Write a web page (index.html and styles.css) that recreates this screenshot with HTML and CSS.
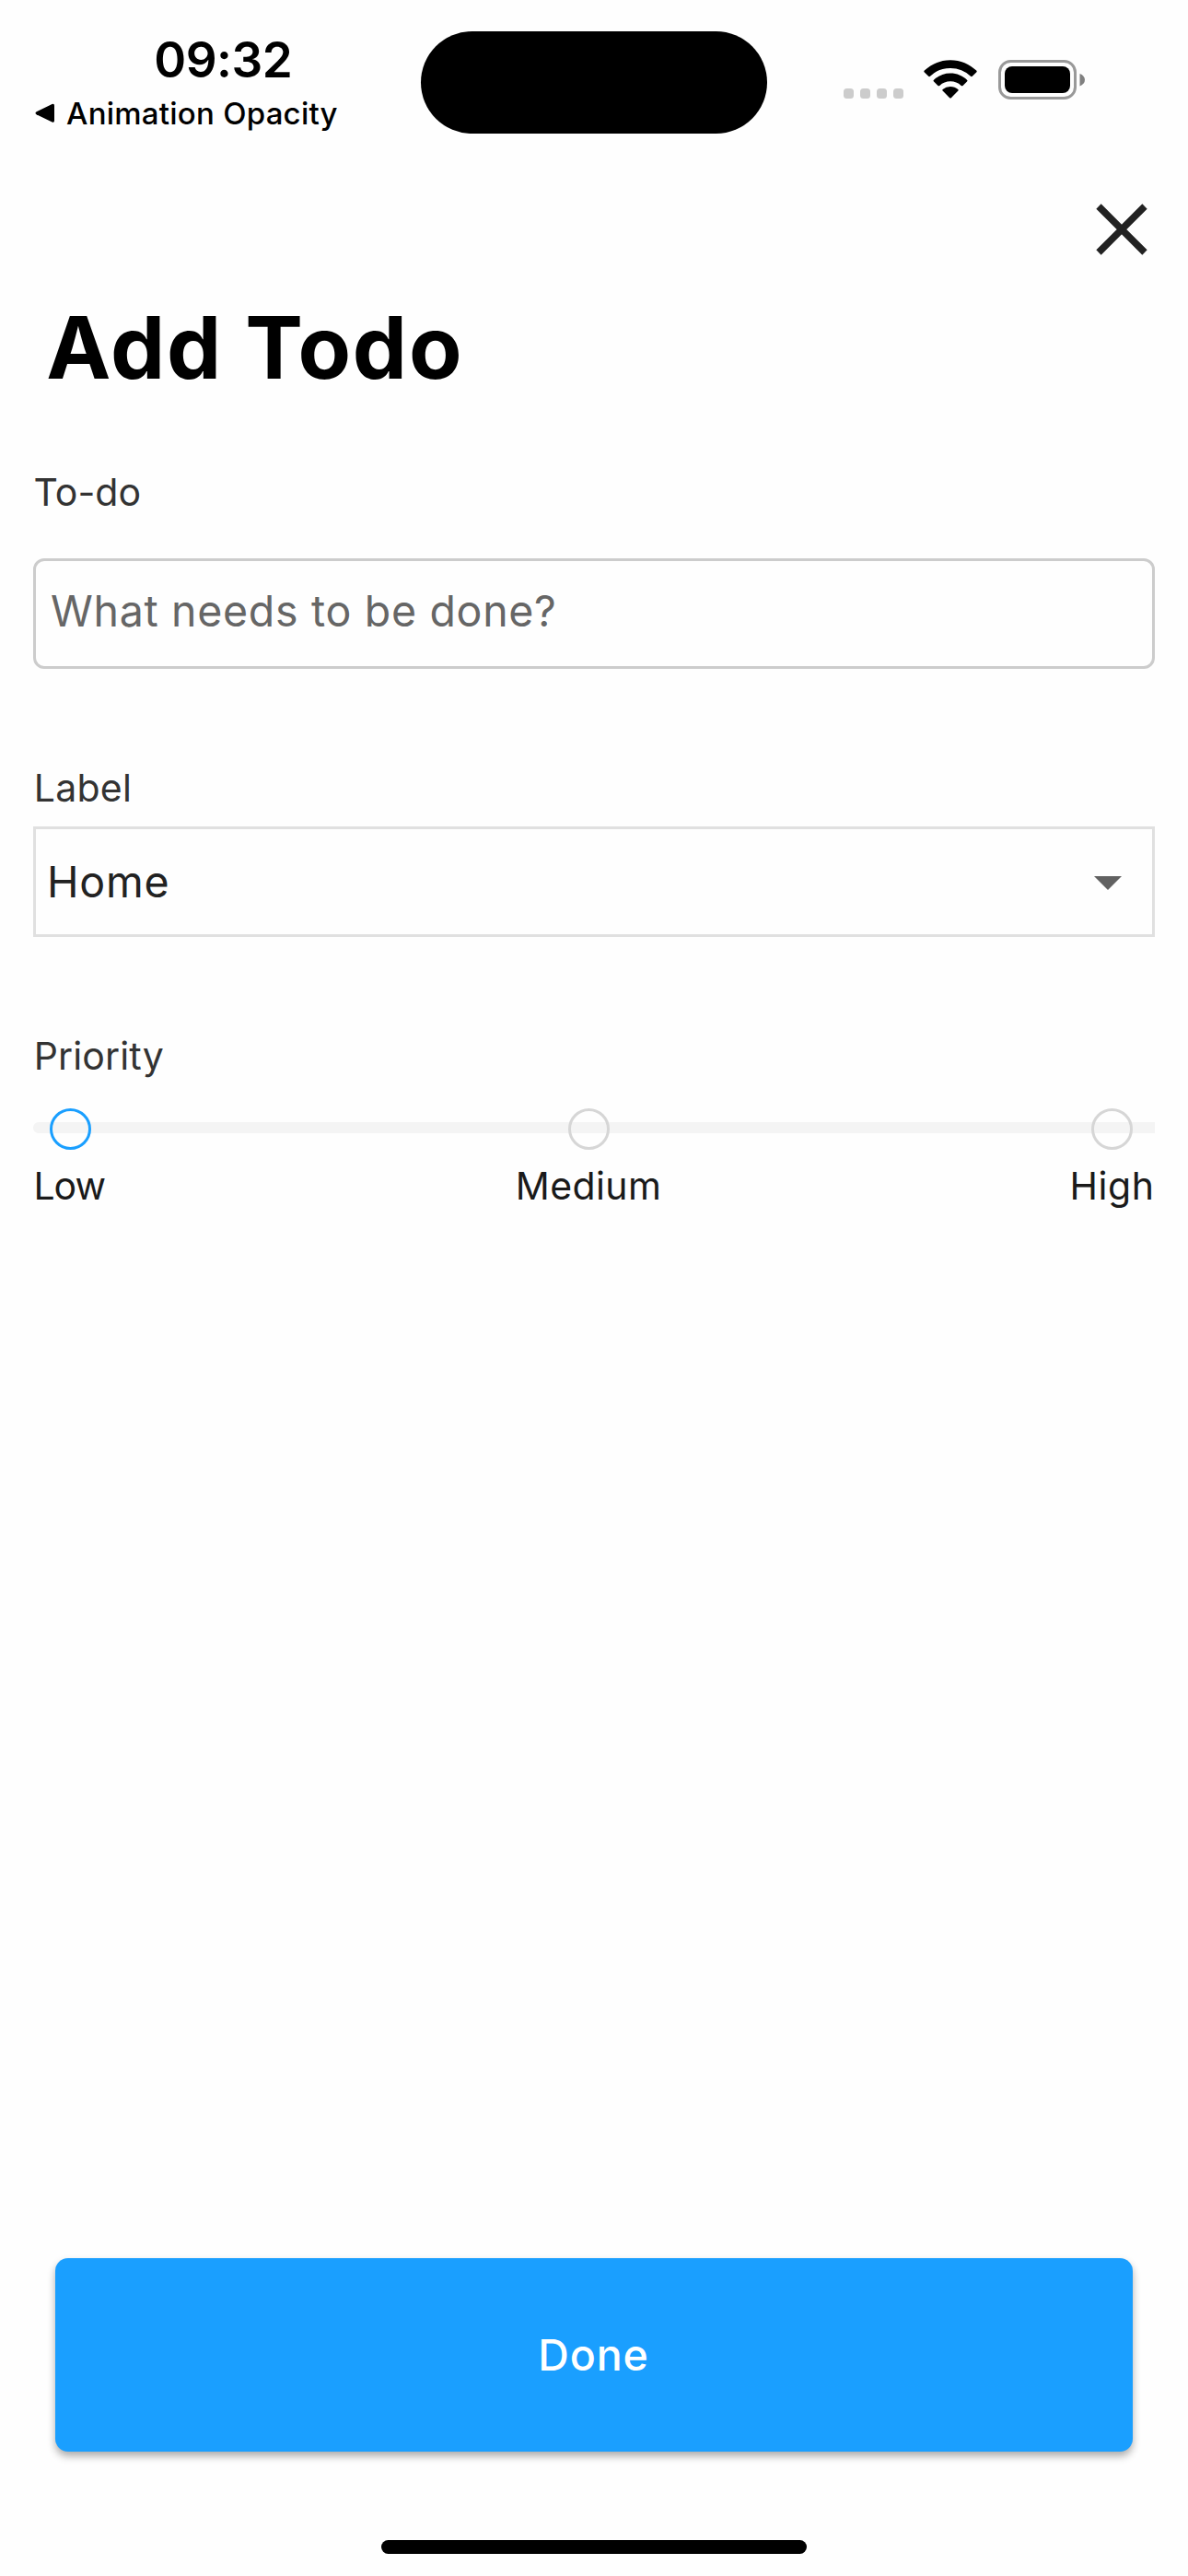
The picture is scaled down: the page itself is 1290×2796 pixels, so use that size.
FILE: index.html
```
<!DOCTYPE html>
<html lang="en">
<head>
<meta charset="utf-8">
<title>Add Todo</title>
<link rel="stylesheet" href="styles.css">
</head>
<body>
<div class="screen">
  <header class="status">
    <div class="status-left">
      <div class="time">09:32</div>
      <div class="back">
        <svg class="back-arrow" width="22" height="22" viewBox="0 0 22 22"><path d="M1.6 9.2 18.6 1 Q21 0.2 21 2.6 V19 Q21 21.4 18.6 20.5 L1.6 12.2 Q-.6 10.7 1.6 9.2Z"/></svg>
        <span>Animation Opacity</span>
      </div>
    </div>
    <div class="island"></div>
    <div class="status-icons">
      <div class="dots"><i></i><i></i><i></i><i></i></div>
      <svg class="wifi" width="58" height="43" viewBox="0 0 58 43">
        <path d="M29 .2C39.9.2 50 4.6 57.2 11.6a1.2 1.2 0 0 1 0 1.8l-4.4 4.3a1.3 1.3 0 0 1-1.8 0A31.700 31.700 0 0 0 29 8.900 31.700 31.700 0 0 0 7 17.700a1.300 1.300 0 0 1-1.800 0L.8 13.400a1.200 1.200 0 0 1 0-1.800C8 4.600 18.100.2 29 .2Z"/>
        <path d="M29 14.600c7 0 13.300 2.700 18 7.100a1.200 1.200 0 0 1 0 1.800l-4.500 4.400a1.300 1.300 0 0 1-1.800 0A17.200 17.200 0 0 0 29 23.300a17.200 17.200 0 0 0-11.700 4.600 1.300 1.300 0 0 1-1.800 0L11 23.500a1.200 1.200 0 0 1 0-1.800c4.700-4.400 11-7.100 18-7.100Z"/>
        <path d="M29 29c3.200 0 6 1 8.300 2.900.6.500.6 1.200.1 1.700l-7.600 7.600a1.100 1.100 0 0 1-1.600 0l-7.600-7.600c-.5-.5-.5-1.200.1-1.700A12.900 12.900 0 0 1 29 29Z"/>
      </svg>
      <svg class="battery" width="95" height="43" viewBox="0 0 95 43">
        <rect x="1.500" y="1.500" width="82" height="40" rx="12" fill="none" stroke="#999" stroke-width="3"/>
        <rect x="7" y="7" width="71" height="29" rx="8"/>
        <path d="M88.500 15c3.300 1.200 5.500 3.600 5.500 6.700s-2.200 5.500-5.500 6.700Z" fill="#808080"/>
      </svg>
    </div>
  </header>

  <div class="toolbar">
    <svg class="close" width="56" height="56" viewBox="0 0 56 56"><path d="M3 3 53 53M53 3 3 53"/></svg>
  </div>

  <h1 class="title">Add Todo</h1>

  <main class="form">
    <label class="label label-todo" for="todo">To-do</label>
    <input class="input" id="todo" type="text" placeholder="What needs to be done?">

    <div class="label label-label">Label</div>
    <div class="select">
      <span>Home</span>
      <svg width="30" height="15" viewBox="0 0 30 15"><path d="M0 0H30L15 15Z"/></svg>
    </div>

    <div class="label label-priority">Priority</div>
    <div class="slider">
      <span class="stop stop-active"></span>
      <span class="stop stop-medium"></span>
      <span class="stop"></span>
    </div>
    <div class="levels">
      <span class="low">Low</span>
      <span class="medium">Medium</span>
      <span class="high">High</span>
    </div>
  </main>

  <button class="done" type="button">Done</button>
  <div class="home-indicator"></div>
</div>
</body>
</html>
```
FILE: styles.css
```
* { box-sizing: border-box; }

body {
  margin: 0;
  background: #fff;
  color: #000;
  font-family: Inter, "Liberation Sans", sans-serif;
}

.screen {
  display: flex;
  flex-direction: column;
  width: 1290px;
  height: 2796px;
  overflow: hidden;
  background: #fefefe;
}

/* Status bar */
.status {
  display: grid;
  grid-template-columns: 457px 376px 457px;
  align-items: start;
  height: 160px;
}

.status-left { padding-top: 35px; }

.time {
  padding-left: 167.3px;
  font-size: 53px;
  font-weight: 600;
  line-height: 60px;
  letter-spacing: -0.52px;
}

.back {
  display: flex;
  align-items: center;
  gap: 12px;
  margin-top: 8px;
  padding-left: 38px;
  font-size: 33px;
  font-weight: 500;
  line-height: 40px;
  letter-spacing: 0.24px;
  white-space: nowrap;
}

.island {
  height: 111px;
  margin-top: 33.500px;
  border-radius: 56px;
  background: #000;
}

.status-icons {
  display: flex;
  align-items: flex-start;
  padding: 65px 0 0 83px;
}

.dots {
  display: flex;
  gap: 7px;
  margin-top: 31px;
}

.dots i {
  width: 11px;
  height: 11px;
  border-radius: 3.500px;
  background: #ccc;
}

.wifi { margin-left: 22px; }
.battery { margin-left: 23px; }

/* Heading */
.toolbar {
  display: flex;
  justify-content: flex-end;
  height: 157px;
  padding: 61px 44px 0 0;
}

.close {
  fill: none;
  stroke: #222;
  stroke-width: 7.500px;
}

.title {
  margin: 0;
  padding-left: 50.2px;
  font-size: 94px;
  font-weight: 700;
  line-height: 120px;
  letter-spacing: 1.8px;
}

/* Form */
.form {
  display: flex;
  flex-direction: column;
  padding: 0 36px;
}

.label {
  padding-left: 0.7px;
  color: #333;
  font-size: 41px;
  line-height: 50px;
}

.label-todo {
  margin: 72px 0 47px;
  padding-left: 0.5px;
  letter-spacing: 0.05px;
}

.label-label {
  margin: 104px 0 17px;
  letter-spacing: 0.27px;
}

.label-priority {
  margin: 104px 0 32px;
  letter-spacing: 0.14px;
}

.input {
  width: 100%;
  height: 120px;
  padding: 0 16px 6px;
  border: 3px solid #ccc;
  border-radius: 12px;
  outline: 0;
  background: transparent;
  font-family: inherit;
  font-size: 46.500px;
  letter-spacing: 0.68px;
}

.input::placeholder {
  color: #666;
  opacity: 1;
}

.select {
  display: flex;
  align-items: center;
  justify-content: space-between;
  height: 120px;
  padding: 0 33px 0 12px;
  border: 3px solid #e0e0e0;
  color: #222;
  font-size: 46.500px;
  line-height: 60px;
  letter-spacing: 0.8px;
}

.select svg {
  margin-top: 3px;
  fill: #616161;
}

.slider {
  display: flex;
  height: 45px;
  padding: 0 24px 0 18px;
  justify-content: space-between;
  background: radial-gradient(circle at 6px 21px, #f4f4f4 5.500px, transparent 6.500px) 0 0 / 6px 100% no-repeat,
    linear-gradient(#f4f4f4, #f4f4f4) 6px 15px / 100% 12px no-repeat;
}

.stop {
  width: 45px;
  height: 45px;
  border: 3px solid #d6d6d6;
  border-radius: 50%;
}

.stop-active { border-color: #1a9fff; }
.stop-medium { margin-right: 6px; }

.levels {
  display: grid;
  grid-template-columns: 523.8px 601.7px auto;
  margin-top: 14px;
  color: #1a1a1a;
  font-size: 41px;
  line-height: 50px;
}

.low {
  padding-left: 0.4px;
  letter-spacing: -1px;
}

.medium { letter-spacing: 0.4px; }
.high { letter-spacing: 0.55px; }

/* Footer */
.done {
  height: 210px;
  margin: auto 60px 96px;
  padding: 0 1px 0 0;
  border: 0;
  border-radius: 14px;
  background: #1a9fff;
  box-shadow: 0 5px 9px rgba(0, 0, 0, 0.32);
  color: #fff;
  font-family: inherit;
  font-size: 46.500px;
  font-weight: 500;
  line-height: 60px;
  letter-spacing: 0.95px;
}

.home-indicator {
  flex: none;
  align-self: center;
  width: 462px;
  height: 15px;
  margin-bottom: 24px;
  border-radius: 8px;
  background: #000;
}
```
